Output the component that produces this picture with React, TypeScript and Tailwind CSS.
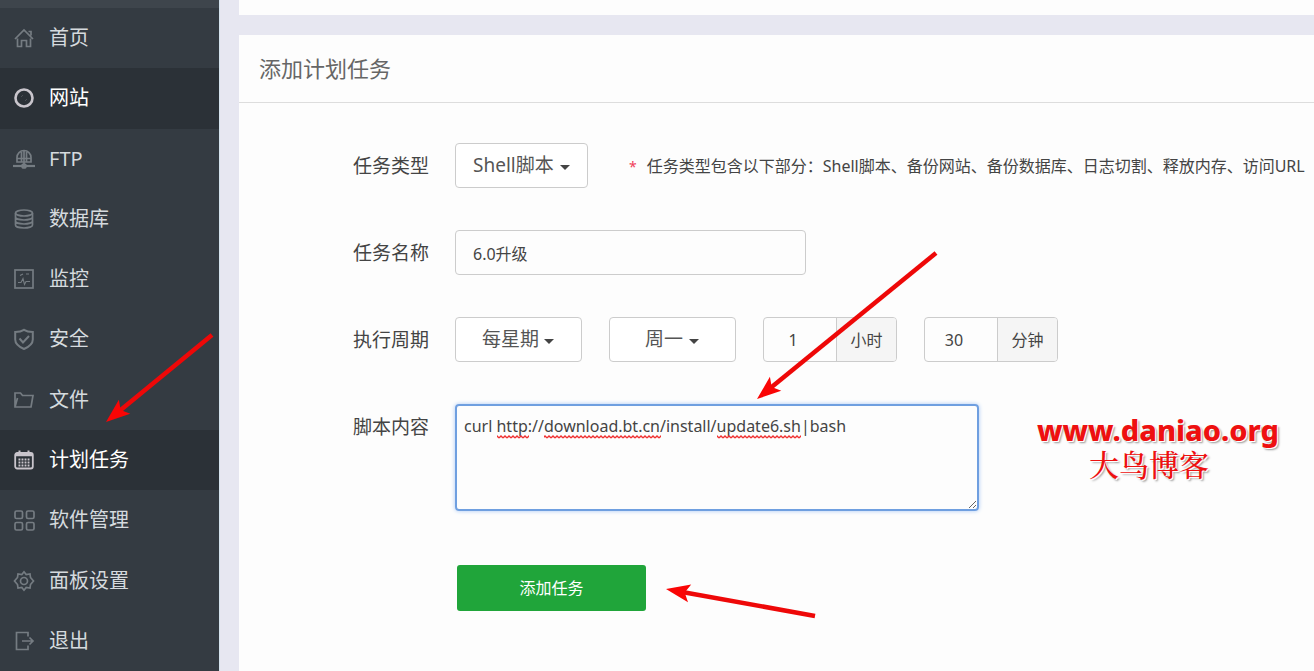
import React, { useState } from "react";

const FONT = "font-['Noto_Sans','Noto_Sans_CJK_SC',sans-serif]";

const icons: Record<string, React.ReactNode> = {
  home: (
    <path d="M1 11 10 2l9 9M14.500 3.500h2.500v4M3.500 10.500v8h4v-6h5v6h4v-8" />
  ),
  globe: (
    <>
      <circle cx="10" cy="10" r="8.500" strokeWidth="2.600" />
      <path d="M7 9l2-2M11 13l2-2" strokeWidth="0.700" opacity="0.300" />
    </>
  ),
  ftp: (
    <>
      <path d="M3 13V8.500a7 7 0 0 1 14 0V13zM3.500 9.500h13M7.500 3v10M12.500 3v10M10 2v14" />
      <path d="M-1 17h22" strokeWidth="2.200" />
      <circle cx="10" cy="17" r="2" fill="currentColor" />
    </>
  ),
  database: (
    <>
      <ellipse cx="10" cy="4" rx="8.500" ry="3" />
      <path d="M1.500 4v12c0 1.700 3.800 3 8.500 3s8.500-1.300 8.500-3V4M1.500 8c0 1.700 3.800 3 8.500 3s8.500-1.300 8.500-3M1.500 12c0 1.700 3.800 3 8.500 3s8.500-1.300 8.500-3" />
    </>
  ),
  monitor: (
    <>
      <rect x="1" y="1" width="18" height="18" />
      <path d="M4 13.500h3l2-4 1.500 6 1.500-3h4M6 6.500l3-1.500M12 5h3" strokeWidth="1.100" />
    </>
  ),
  shield: (
    <path
      d="M10 .800C7.500 2.500 4.500 3 1.200 3v7.500c0 4.500 4.200 7.500 8.800 9.500 4.600-2 8.800-5 8.800-9.500V3C15.500 3 12.500 2.500 10 .800zM5.500 9.500l3.500 4 6-6.500"
      strokeWidth="2"
    />
  ),
  folder: (
    <path d="M1 17V3h5.500l2 2.500h10.500l-2 11.500zM1 17l2.500-9" />
  ),
  calendar: (
    <>
      <rect x="1.200" y="3" width="17.600" height="15.500" rx="2" strokeWidth="1.800" />
      <path d="M1 5h18" strokeWidth="2.500" />
      <path d="M5.500 0.500v3M14.500 0.500v3" strokeWidth="2" />
      <path d="M4.500 9.500h11M4.500 12.500h11M4.500 15.500h11" strokeWidth="1.800" strokeDasharray="1.900 1.133" />
    </>
  ),
  grid: (
    <>
      <rect x="1" y="1" width="7.500" height="7.500" rx="1.500" />
      <rect x="12.500" y="1" width="7.500" height="7.500" rx="1.500" />
      <rect x="1" y="12.500" width="7.500" height="7.500" rx="1.500" />
      <rect x="12.500" y="12.500" width="7.500" height="7.500" rx="1.500" />
    </>
  ),
  gear: (
    <>
      <path d="M10 .800 12.200 3.500l3.800-.500.500 3.500 3 3.500-3 3.500-.500 3.500-3.800-.500L10 19.200 7.800 16.500 4 17l-.500-3.500-3-3.500 3-3.500L4 3l3.800.500z" />
      <circle cx="10" cy="10" r="3.500" />
    </>
  ),
  logout: (
    <path d="M14 5.500V1.500H2.500v17H14v-4M8 10h11M15.500 6.500 19 10l-3.500 3.500" />
  ),
};

const navItems = [
  { icon: "home", label: "首页" },
  { icon: "globe", label: "网站", active: true },
  { icon: "ftp", label: "FTP" },
  { icon: "database", label: "数据库" },
  { icon: "monitor", label: "监控" },
  { icon: "shield", label: "安全" },
  { icon: "folder", label: "文件" },
  { icon: "calendar", label: "计划任务", active: true },
  { icon: "grid", label: "软件管理" },
  { icon: "gear", label: "面板设置" },
  { icon: "logout", label: "退出" },
];

function Sidebar() {
  return (
    <nav className="flex w-[220px] shrink-0 flex-col border-r border-[#d5e3ee] bg-[#343b42]">
      <div className="h-2 bg-[#3e454c]" />
      <ul className="flex flex-1 flex-col">
        {navItems.map((item) => (
          <li key={item.label} className="flex flex-1">
            <a
              href="#"
              className={
                item.active
                  ? "flex flex-1 items-center gap-[15px] bg-[#2b3137] pl-3.5 text-xl text-white"
                  : "flex flex-1 items-center gap-[15px] pl-3.5 text-xl text-[#d5dade]"
              }
            >
              <svg
                viewBox="0 0 20 20"
                fill="none"
                stroke="currentColor"
                strokeWidth="1.700"
                aria-hidden="true"
                className={
                  item.active
                    ? "size-5 overflow-visible text-[#c9c5cc]"
                    : "size-5 overflow-visible text-[#757c82]"
                }
              >
                {icons[item.icon]}
              </svg>
              {item.label}
            </a>
          </li>
        ))}
      </ul>
    </nav>
  );
}

const dropdownStyles = {
  type: { select: "w-[133px] pl-[17px]", caret: "right-[18px]" },
  week: { select: "w-[127px] pl-[26px]", caret: "right-[28px]" },
  day: { select: "w-[127px] pl-[35px]", caret: "right-[37px]" },
};

function Dropdown({ id, label, options, kind }: { id: string; label: string; options: string[]; kind: keyof typeof dropdownStyles }) {
  const style = dropdownStyles[kind];
  return (
    <div className="relative h-[45px]">
      <select
        id={id}
        aria-label={label}
        className={`h-[45px] appearance-none rounded border border-[#ccc] bg-white text-[19px] text-[#555] ${style.select}`}
      >
        {options.map((o) => (
          <option key={o}>{o}</option>
        ))}
      </select>
      <svg viewBox="0 0 10 5" aria-hidden="true" className={`pointer-events-none absolute top-[22px] h-[5px] w-2.5 fill-[#444] ${style.caret}`}>
        <path d="M0 0h10L5 5z" />
      </svg>
    </div>
  );
}

function TimeField({ label, unit, initial }: { label: string; unit: string; initial: string }) {
  const [value, setValue] = useState(initial);
  return (
    <label className="flex h-[45px] overflow-hidden rounded border border-[#ccc] text-base text-[#444]">
      <input
        aria-label={label}
        value={value}
        onChange={(e) => setValue(e.target.value)}
        className="w-[72px] pr-3.5 text-center"
      />
      <span className="flex w-[60px] items-center justify-center border-l border-[#ccc] bg-[#f5f5f5]">{unit}</span>
    </label>
  );
}

function Row({ htmlFor, label, children }: { htmlFor: string; label: string; children: React.ReactNode }) {
  return (
    <div className="flex items-start gap-[26px]">
      <label htmlFor={htmlFor} className="w-[76px] shrink-0 whitespace-nowrap text-[19px] leading-[47px] text-[#444]">
        {label}
      </label>
      {children}
    </div>
  );
}

function TaskForm() {
  const [name, setName] = useState("6.0升级");
  const [script, setScript] = useState("curl http://download.bt.cn/install/update6.sh|bash");
  return (
    <form className="flex flex-col gap-10 pt-10 pl-[114px]" onSubmit={(e) => e.preventDefault()}>
      <Row htmlFor="task-type" label="任务类型">
        <Dropdown id="task-type" label="任务类型" options={["Shell脚本"]} kind="type" />
        <p className="ml-[15px] flex gap-2.5 whitespace-nowrap text-base leading-[47px] text-[#444]">
          <span className="text-sm leading-[47px] text-[#f0405a]">*</span>
          任务类型包含以下部分：Shell脚本、备份网站、备份数据库、日志切割、释放内存、访问URL
        </p>
      </Row>
      <Row htmlFor="task-name" label="任务名称">
        <input
          id="task-name"
          value={name}
          onChange={(e) => setName(e.target.value)}
          className="h-[45px] w-[351px] rounded-sm border border-[#ccc] px-[17px] text-base text-[#444]"
        />
      </Row>
      <Row htmlFor="cycle" label="执行周期">
        <div className="flex gap-[27px]">
          <Dropdown id="cycle" label="执行周期" options={["每星期"]} kind="week" />
          <Dropdown id="weekday" label="星期" options={["周一"]} kind="day" />
          <TimeField label="小时" unit="小时" initial="1" />
          <TimeField label="分钟" unit="分钟" initial="30" />
        </div>
      </Row>
      <Row htmlFor="script" label="脚本内容">
        <div className="relative">
          <textarea
            id="script"
            value={script}
            onChange={(e) => setScript(e.target.value)}
            spellCheck={false}
            className="block h-[107px] w-[524px] rounded-sm border-2 border-[#6f9fe0] px-[7px] py-2 text-base text-[#444] shadow-[0_0_4px_#a9c8f5] outline-none"
          />
          <svg aria-hidden="true" className="pointer-events-none absolute top-[31px] left-0 h-1 w-full">
            <defs>
              <pattern id="wave" width="4" height="4" patternUnits="userSpaceOnUse">
                <path d="M0 3l2-2 2 2" fill="none" stroke="#f03030" strokeWidth="1.300" />
              </pattern>
            </defs>
            <rect x="42" width="32" height="4" fill="url(#wave)" />
            <rect x="89" width="117" height="4" fill="url(#wave)" />
            <rect x="262" width="84" height="4" fill="url(#wave)" />
          </svg>
        </div>
      </Row>
      <button type="submit" className="mt-3.5 mb-10 ml-[104px] h-[46px] w-[189px] rounded-[3px] bg-[#20a53a] text-base text-white">
        添加任务
      </button>
    </form>
  );
}

const arrows = [
  { from: [212, 335], to: [106, 422] },
  { from: [936, 253], to: [757, 399] },
  { from: [815, 616], to: [666, 589] },
];

function Arrows() {
  return (
    <svg aria-hidden="true" className="pointer-events-none absolute inset-0 size-full">
      {arrows.map(({ from, to }) => {
        const length = Math.hypot(from[0] - to[0], from[1] - to[1]);
        const angle = (Math.atan2(from[1] - to[1], from[0] - to[0]) * 180) / Math.PI;
        return (
          <g key={to[0]} transform={`translate(${to[0]} ${to[1]}) rotate(${angle})`}>
            <path d={`M15 0H${length}`} stroke="#ee0808" strokeWidth="4.500" />
            <path d="M0 0 24-9 19 0l5 9z" fill="#fa0505" />
          </g>
        );
      })}
    </svg>
  );
}

export default function App() {
  return (
    <div className={`relative flex min-h-screen overflow-hidden bg-[#e7e7f1] ${FONT}`}>
      <Sidebar />
      <main className="ml-[19px] flex min-w-0 flex-1 flex-col gap-5">
        <div className="h-[15px] bg-[#fdfdfd]" />
        <section className="flex-1 bg-[#fdfdfd]">
          <h1 className="border-b border-[#ddd] px-5 text-[22px] leading-[67px] text-[#666]">添加计划任务</h1>
          <TaskForm />
        </section>
      </main>
      <div className="pointer-events-none absolute top-[412px] left-[1037px] flex flex-col text-[#ee1010] [text-shadow:1px_1px_0_#fff,2px_2px_2px_#999]">
        <span className="font-['Noto_Sans',sans-serif] text-[29px] leading-9 font-extrabold">www.daniao.org</span>
        <span className="pl-[52px] font-['Liberation_Serif','Noto_Serif_CJK_SC','Noto_Sans_CJK_SC',serif] text-[30px] leading-9 font-medium">大鸟博客</span>
      </div>
      <Arrows />
    </div>
  );
}
